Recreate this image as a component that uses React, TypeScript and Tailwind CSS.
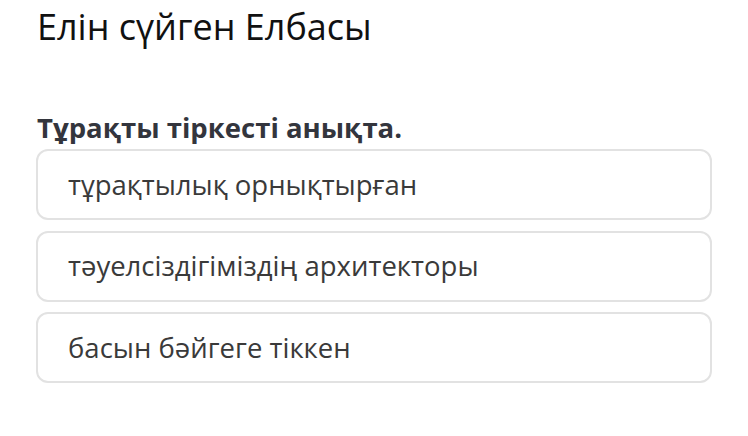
import React from 'react'

const options = [
	'тұрақтылық орнықтырған',
	'тәуелсіздігіміздің архитекторы',
	'басын бәйгеге тіккен',
]

export default function App() {
	return (
		<div className="w-[748px] h-[436px] bg-white pl-[37px] pr-[36px] font-['Open_Sans',sans-serif]">
			<h1 className="pt-[5px] text-[36px] leading-[44px] text-[#111]">Елін сүйген Елбасы</h1>
			<p className="mt-[61px] text-[27.5px] leading-[36px] font-bold text-[#33353d]">Тұрақты тіркесті анықта.</p>
			<div className="mt-[3px] flex flex-col gap-[10.5px] -ml-px">
				{options.map(opt => (
					<div key={opt} className="h-[71px] flex items-center px-[30px] border-2 border-[#e2e2e2] rounded-[12px] text-[27.5px] text-[#3a3a3a]">
						{opt}
					</div>
				))}
			</div>
		</div>
	)
}
